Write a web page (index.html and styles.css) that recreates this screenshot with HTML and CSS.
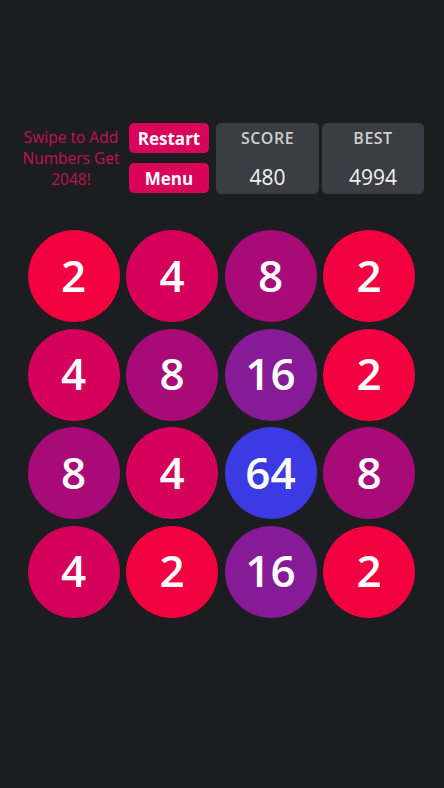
FILE: index.html
```html
<!DOCTYPE html>
<html lang="en">
<head>
  <meta charset="UTF-8" />
  <meta name="viewport" content="width=device-width, initial-scale=1.0"/>
  <title>2048</title>
  <link rel="stylesheet" href="styles.css">
</head>
<body>
  <div class="game">
    <div class="header">
      <div class="hint">Swipe to Add Numbers Get 2048!</div>
      <div class="buttons">
        <button class="btn">Restart</button>
        <button class="btn">Menu</button>
      </div>
      <div class="box score-box">
        <span class="label">SCORE</span>
        <span class="value">480</span>
      </div>
      <div class="box best-box">
        <span class="label">BEST</span>
        <span class="value">4994</span>
      </div>
    </div>

    <div class="board">
      <div class="tile t2">2</div>
      <div class="tile t4">4</div>
      <div class="tile t8">8</div>
      <div class="tile t2">2</div>

      <div class="tile t4">4</div>
      <div class="tile t8">8</div>
      <div class="tile t16">16</div>
      <div class="tile t2">2</div>

      <div class="tile t8">8</div>
      <div class="tile t4">4</div>
      <div class="tile t64">64</div>
      <div class="tile t8">8</div>

      <div class="tile t4">4</div>
      <div class="tile t2">2</div>
      <div class="tile t16">16</div>
      <div class="tile t2">2</div>
    </div>
  </div>
</body>
</html>
```

FILE: styles.css
```css
body {
  margin: 0;
  background-color: #1c1d21;
  font-family: "Open Sans", Lato, sans-serif;
}
.game {
  width: 444px;
  height: 788px;
}
.header {
  display: flex;
  align-items: flex-start;
  padding: 123px 0 0 19px;
}
.hint {
  width: 104px;
  margin-top: 4px;
  text-align: center;
  color: #c5114f;
  font-size: 15.5px;
  line-height: 21px;
}
.buttons {
  display: flex;
  flex-direction: column;
  gap: 10px;
  margin-left: 6px;
}
.btn {
  width: 80px;
  height: 30px;
  padding: 0;
  border: none;
  border-radius: 5px;
  background: #d9045a;
  color: #fff;
  font-family: "Open Sans", Lato, sans-serif;
  font-size: 17px;
  font-weight: bold;
}
.box {
  display: flex;
  flex-direction: column;
  align-items: center;
  height: 71px;
  border-radius: 5px;
  background: #3a3d43;
}
.score-box {
  width: 103px;
  margin-left: 7px;
}
.best-box {
  width: 102px;
  margin-left: 3px;
}
.label {
  margin-top: 4px;
  color: #cfcfd1;
  font-size: 16px;
  font-weight: 600;
  letter-spacing: 0.5px;
  line-height: 22px;
}
.value {
  margin-top: 15px;
  color: #f2f2f2;
  font-size: 21px;
  line-height: 26px;
}
.board {
  display: grid;
  grid-template-columns: repeat(4, 92px);
  grid-auto-rows: 92px;
  gap: 6.5px;
  margin: 36px 0 0 27.5px;
}
.tile {
  display: flex;
  align-items: center;
  justify-content: center;
  box-sizing: border-box;
  padding-bottom: 3px;
  border-radius: 50%;
  color: #fff;
  font-size: 44px;
  font-weight: 600;
}
.t2 { background: #f2003f; }
.t4 { background: #d4005a; }
.t8 { background: #a80b78; }
.t16 { background: #861a97; }
.t64 { background: #3c3be3; }
```
